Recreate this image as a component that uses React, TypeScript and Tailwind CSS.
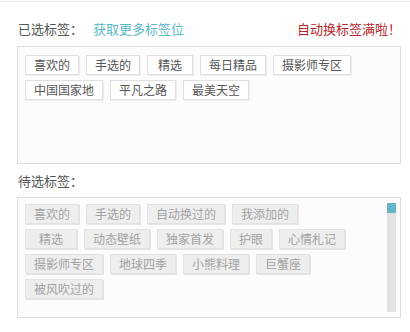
type T = { name: string; cls?: string };

const selected: T[][] = [
  [
    { name: "喜欢的" },
    { name: "手选的" },
    { name: "精选", cls: "px-[10px]" },
    { name: "每日精品" },
    { name: "摄影师专区" },
  ],
  [{ name: "中国国家地" }, { name: "平凡之路" }, { name: "最美天空" }],
];

const pending: T[][] = [
  [{ name: "喜欢的" }, { name: "手选的" }, { name: "自动换过的" }, { name: "我添加的" }],
  [
    { name: "精选", cls: "px-[13px]" },
    { name: "动态壁纸" },
    { name: "独家首发" },
    { name: "护眼" },
    { name: "心情札记" },
  ],
  [{ name: "摄影师专区" }, { name: "地球四季" }, { name: "小熊料理" }, { name: "巨蟹座" }],
  [{ name: "被风吹过的" }],
];

function Tag({ name, cls, muted }: T & { muted?: boolean }) {
  return (
    <span
      className={
        "block h-[20px] shrink-0 whitespace-nowrap border px-[8px] text-[12px] leading-[18px] " +
        (muted
          ? "border-[#e3e3e3] bg-[#eeeeee] text-[#a2a2a2] shadow-[1px_1px_0_#e4e4e4] "
          : "border-[#e0e0e0] bg-white text-[#555] shadow-[1px_1px_0_#eeeeee] ") +
        (cls ?? "")
      }
    >
      {name}
    </span>
  );
}

function TagRows({ rows, muted }: { rows: T[][]; muted?: boolean }) {
  return (
    <div className="flex flex-col gap-y-[5px]">
      {rows.map((row, r) => (
        <div key={r} className="flex gap-x-[7px]">
          {row.map((t, i) => (
            <Tag key={i} name={t.name} cls={t.cls} muted={muted} />
          ))}
        </div>
      ))}
    </div>
  );
}

export default function App() {
  return (
    <div
      className="mt-px h-[331px] w-[410px] border-t border-[#ececec] bg-white"
      style={{ fontFamily: '"Noto Sans CJK SC", "Noto Sans", sans-serif' }}
    >
      <div className="pl-[17px] pr-[9px]">
        <div className="flex items-center pt-[17px] text-[13px] leading-[20px]">
          <span className="pl-px text-[#555]">已选标签：</span>
          <span className="ml-[10px] text-[#55b9c6]">获取更多标签位</span>
          <span className="ml-auto text-[#b8262b]">自动换标签满啦！</span>
        </div>

        <div className="mt-[7px] h-[118px] border border-[#dddddd] bg-[#fcfbfd] pl-[7px] pt-[8px]">
          <TagRows rows={selected} />
        </div>

        <div className="mt-[7px] pl-px text-[13px] leading-[20px] text-[#555]">待选标签：</div>

        <div className="mt-[6px] flex h-[121px] border border-[#dddddd] bg-[#fcfbfd]">
          <div className="flex-1 pl-[7px] pt-[6px]">
            <TagRows rows={pending} muted />
          </div>
          <div className="my-[5px] mr-[4px] flex w-[9px] flex-col bg-[#e2e2e2]">
            <div className="h-[10px] bg-[#62b6c9]" />
          </div>
        </div>
      </div>
    </div>
  );
}
